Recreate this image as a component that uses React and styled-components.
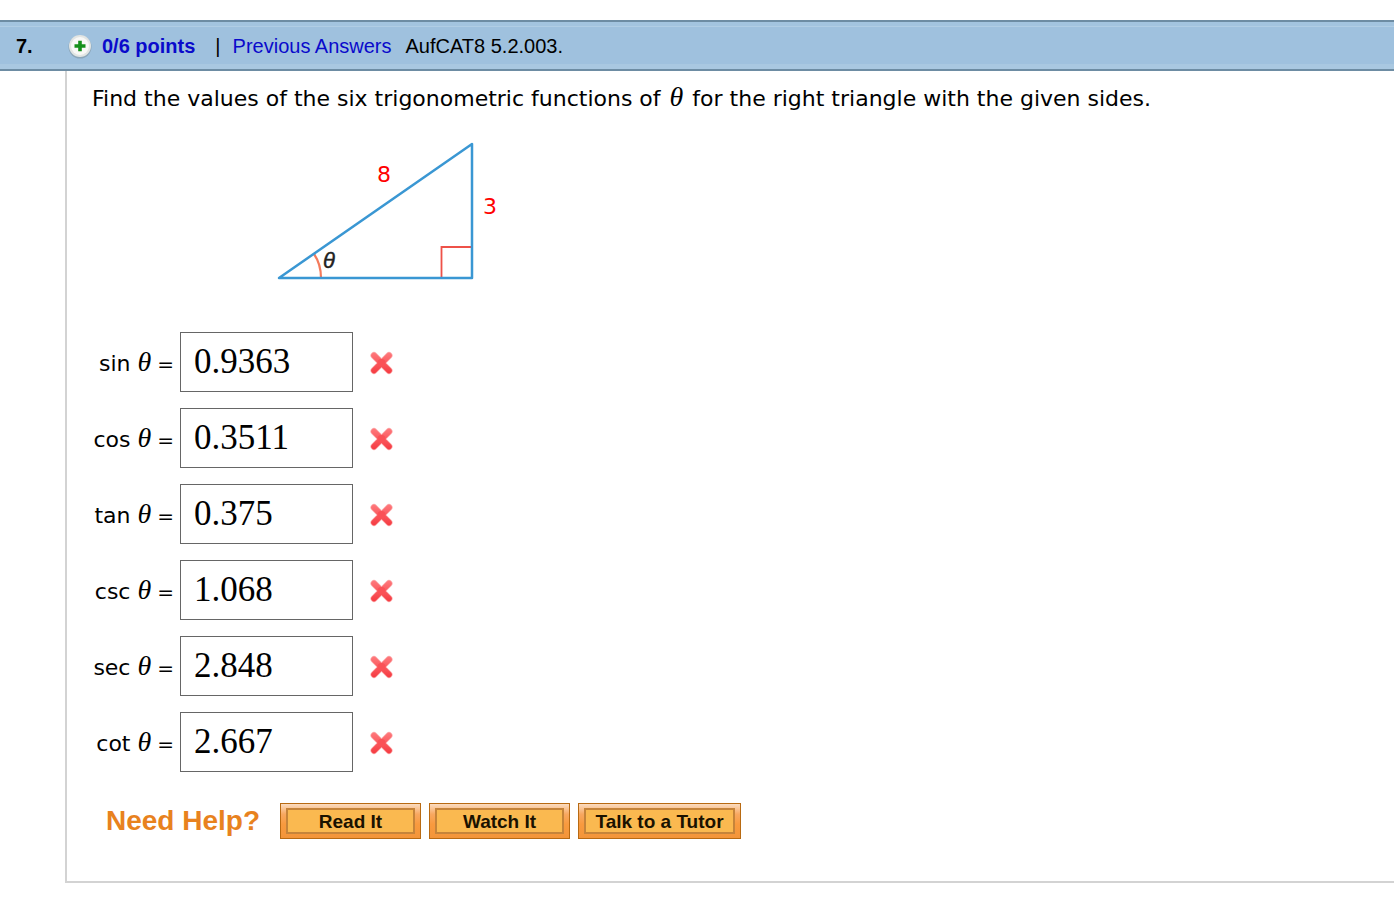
import React from "react";
import styled, { createGlobalStyle } from "styled-components";

const GlobalStyle = createGlobalStyle`
    *, *::before, *::after {
        box-sizing: border-box;
    }
    body {
        margin: 0;
        background: #fff;
        color: #000;
        font-family: "DejaVu Sans", Verdana, sans-serif;
        font-size: 22px;
    }
`;

const Page = styled.main`
    padding: 20px 0 24px;
`;

const Header = styled.header`
    display: flex;
    align-items: center;
    height: 51px;
    padding: 2px 16px 0;
    border-top: 2px solid #6d8ca3;
    border-bottom: 2px solid #6d8ca3;
    background: #9fc1de;
    box-shadow: inset 0 4px 0 #a3c4df, inset 0 5px 0 #b0cde4, inset 0 -5px 0 #a9c8e1;
    font-family: "Liberation Sans", Arial, sans-serif;
    font-size: 20px;
    white-space: pre;
`;

const Number = styled.strong`
    width: 52px;
`;

const ExpandButton = styled.button`
    display: flex;
    width: 24px;
    height: 24px;
    margin-right: 10px;
    padding: 0;
    border: none;
    background: none;
`;

const HeaderLink = styled.a`
    color: #0a0acb;
    font-weight: ${({ $bold }) => ($bold ? "bold" : "normal")};
    text-decoration: none;
`;

const Divider = styled.span`
    margin: 0 12px 0 20px;
`;

const Source = styled.span`
    margin-left: 14px;
`;

const Panel = styled.section`
    margin-left: 65px;
    padding: 10px 25px 42px;
    border-left: 2px solid #d3d3d3;
    border-bottom: 2px solid #d3d3d3;
`;

const Question = styled.p`
    margin: 0;
    line-height: 36px;
`;

const Theta = styled.i`
    font-family: "Liberation Serif", "Times New Roman", serif;
    font-size: 28px;
    line-height: 1;
`;

const QuestionTheta = styled(Theta)`
    margin: 0 2px;
`;

const Figure = styled.svg`
    display: block;
    margin: 15px 0 40px 178px;
`;

const Answers = styled.form`
    display: grid;
    gap: 16px;
`;

const AnswerRow = styled.div`
    display: flex;
    align-items: center;
`;

const AnswerLabel = styled.label`
    width: 82px;
    margin-right: 6px;
    text-align: right;
    white-space: nowrap;
`;

const Equals = styled.span`
    margin-left: 6px;
    font-size: 20px;
`;

const AnswerInput = styled.input`
    width: 173px;
    height: 60px;
    margin-right: 16px;
    padding: 0 13px;
    border: 1px solid #666;
    border-radius: 0;
    outline: none;
    background: #fff;
    color: #000;
    font-family: "Liberation Serif", "Times New Roman", serif;
    font-size: 35px;
`;

const HelpBar = styled.div`
    display: flex;
    align-items: center;
    gap: 8px;
    margin: 31px 0 0 14px;
    font-family: "Liberation Sans", Arial, sans-serif;
`;

const HelpTitle = styled.strong`
    width: 166px;
    color: #e8821e;
    font-size: 28px;
    line-height: 36px;
    white-space: nowrap;
`;

const HelpButton = styled.button`
    display: flex;
    width: ${({ $wide }) => ($wide ? "163px" : "141px")};
    height: 36px;
    padding: 4px 5px;
    border: 1px solid #b86a12;
    background: linear-gradient(#fbdcc0, #f8a860 30%, #f89a3e 60%, #f3953a);
    color: #1a1200;
    font-family: inherit;
    font-size: 19px;
    font-weight: bold;
`;

const HelpFace = styled.span`
    flex: 1;
    border: 2px solid #c5843a;
    background: #fab950;
    line-height: 24px;
    white-space: nowrap;
`;

const ANSWERS = [
    { fn: "sin", value: "0.9363" },
    { fn: "cos", value: "0.3511" },
    { fn: "tan", value: "0.375" },
    { fn: "csc", value: "1.068" },
    { fn: "sec", value: "2.848" },
    { fn: "cot", value: "2.667" },
];

const PlusIcon = () => (
    <svg width="24" height="24" viewBox="0 0 24 24" aria-hidden="true">
        <circle cx="12" cy="12" r="11.5" fill="#8ba6b9" />
        <circle cx="12" cy="11" r="11" fill="#e2e5e3" />
        <circle cx="12" cy="11" r="9" fill="#f8f8f6" />
        <path d="M10.2 5.8h3.6v3.4h3.7v3.6h-3.7v3.5h-3.6v-3.5H6.5V9.2h3.7z" fill="#14901a" />
    </svg>
);

const WrongIcon = () => (
    <svg width="25" height="25" viewBox="0 0 25 25" role="img" aria-label="Incorrect">
        <defs>
            <linearGradient id="wrongFill" gradientUnits="userSpaceOnUse" x1="0" y1="2" x2="0" y2="24">
                <stop offset="0" stopColor="#ff7b7e" />
                <stop offset="1" stopColor="#f5383f" />
            </linearGradient>
        </defs>
        <path d="M5 5.5L20 20.5M20 5.5L5 20.5" stroke="#fcb0b1" strokeWidth="7" strokeLinecap="round" />
        <path d="M5 5.5L20 20.5M20 5.5L5 20.5" stroke="url(#wrongFill)" strokeWidth="5.6" strokeLinecap="round" />
        <circle cx="12.5" cy="13" r="4" fill="#fa5156" />
    </svg>
);

const Triangle = () => (
    <Figure width="240" height="160" viewBox="0 0 240 160" role="img" aria-label="Right triangle">
        <path d="M171.5 146V115H202" fill="none" stroke="#ee5148" strokeWidth="1.8" />
        <path d="M44 122Q51 132 51 146" fill="none" stroke="#f47b5c" strokeWidth="2.2" />
        <path d="M9 146L202 12V146Z" fill="none" stroke="#3a97d3" strokeWidth="2.5" strokeLinejoin="round" />
        <text x="107" y="50" fill="#f00" fontSize="22">8</text>
        <text x="213" y="82" fill="#f00" fontSize="22">3</text>
        <text
            x="53"
            y="136"
            fill="#222"
            stroke="#222"
            strokeWidth="0.4"
            fontFamily="Liberation Sans, Arial, sans-serif"
            fontSize="22"
            fontStyle="italic"
        >
            θ
        </text>
    </Figure>
);

const Answer = ({ fn, value }) => (
    <AnswerRow>
        <AnswerLabel htmlFor={fn}>
            {fn} <Theta>θ</Theta>
            <Equals>=</Equals>
        </AnswerLabel>
        <AnswerInput id={fn} type="text" defaultValue={value} />
        <WrongIcon />
    </AnswerRow>
);

const App = () => {
    return (
        <>
            <GlobalStyle />
            <Page>
                <Header>
                    <Number>7.</Number>
                    <ExpandButton type="button" aria-label="Expand">
                        <PlusIcon />
                    </ExpandButton>
                    <HeaderLink href="#points" $bold>0/6 points</HeaderLink>
                    <Divider>|</Divider>
                    <HeaderLink href="#answers">Previous Answers</HeaderLink>
                    <Source>AufCAT8 5.2.003.</Source>
                </Header>
                <Panel>
                    <Question>
                        Find the values of the six trigonometric functions of <QuestionTheta>θ</QuestionTheta> for
                        the right triangle with the given sides.
                    </Question>
                    <Triangle />
                    <Answers>
                        {ANSWERS.map((item) => (
                            <Answer key={item.fn} {...item} />
                        ))}
                    </Answers>
                    <HelpBar>
                        <HelpTitle>Need Help?</HelpTitle>
                        <HelpButton type="button"><HelpFace>Read It</HelpFace></HelpButton>
                        <HelpButton type="button"><HelpFace>Watch It</HelpFace></HelpButton>
                        <HelpButton type="button" $wide><HelpFace>Talk to a Tutor</HelpFace></HelpButton>
                    </HelpBar>
                </Panel>
            </Page>
        </>
    );
};

export default App;
